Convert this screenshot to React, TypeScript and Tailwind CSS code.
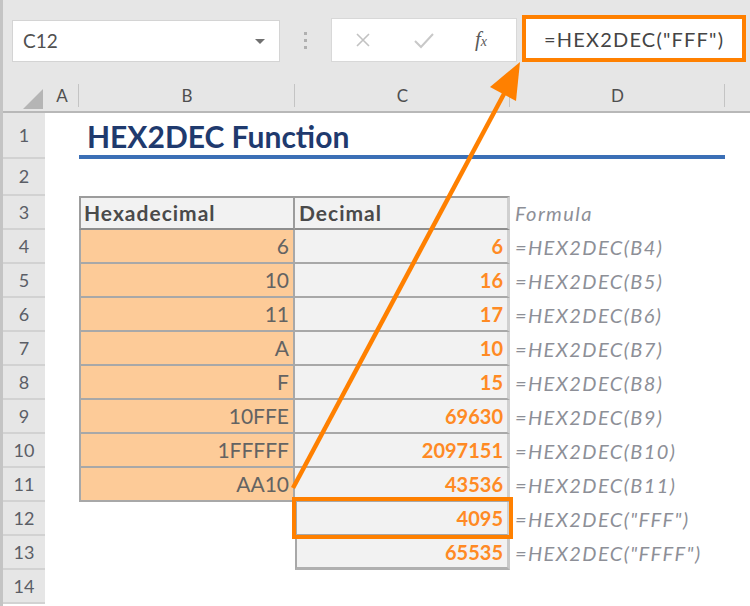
import React from 'react';

interface Row {
  n: number;
  hex?: string;
  dec?: string;
  formula?: string;
}

const rows: Row[] = [
  { n: 4, hex: '6', dec: '6', formula: '=HEX2DEC(B4)' },
  { n: 5, hex: '10', dec: '16', formula: '=HEX2DEC(B5)' },
  { n: 6, hex: '11', dec: '17', formula: '=HEX2DEC(B6)' },
  { n: 7, hex: 'A', dec: '10', formula: '=HEX2DEC(B7)' },
  { n: 8, hex: 'F', dec: '15', formula: '=HEX2DEC(B8)' },
  { n: 9, hex: '10FFE', dec: '69630', formula: '=HEX2DEC(B9)' },
  { n: 10, hex: '1FFFFF', dec: '2097151', formula: '=HEX2DEC(B10)' },
  { n: 11, hex: 'AA10', dec: '43536', formula: '=HEX2DEC(B11)' },
];

const font = { fontFamily: 'Lato, "Open Sans", sans-serif' };

// shared text styles for the sheet cells
const hexText = 'text-[21px] text-[#636363]';
const decText = 'text-[20px] font-bold text-[#ff8a24]';
const fText = 'text-[20px] italic tracking-[1.4px] text-[#8d8f97]';

function RowHead({ n, h }: { n: number; h: string }) {
  return (
    <div
      className={`w-[42px] ${h} shrink-0 bg-[#e6e6e6] border-b-2 border-[#d2d2d2] flex items-center justify-center text-[18px] text-[#5b5e66]`}
    >
      {n}
    </div>
  );
}

function Toolbar() {
  return (
    <div className="h-[80px] bg-[#e6e6e6] flex items-start">
      <div className="ml-[9px] mt-[20px] w-[268px] h-[42px] bg-white border border-[#d4d4d4] flex items-center justify-between pl-[10px] pr-[14px]">
        <span className="text-[19px] text-[#505050]">C12</span>
        <span className="w-0 h-0 border-l-[5px] border-r-[5px] border-t-[5px] border-l-transparent border-r-transparent border-t-[#707070]" />
      </div>
      <div className="ml-[24px] mt-[32px] flex flex-col gap-[4px]">
        <span className="w-[3px] h-[3px] bg-[#b0b0b0]" />
        <span className="w-[3px] h-[3px] bg-[#b0b0b0]" />
        <span className="w-[3px] h-[3px] bg-[#b0b0b0]" />
      </div>
      <div className="ml-[24px] mt-[18px] w-[186px] h-[44px] bg-white border border-[#d8d8d8] flex items-center">
        <svg className="ml-[23px]" width="16" height="16" viewBox="0 0 16 16">
          <path d="M2 2 L14 14 M14 2 L2 14" stroke="#c2c2c2" strokeWidth="1.6" />
        </svg>
        <svg className="ml-[42px]" width="22" height="18" viewBox="0 0 22 18">
          <path d="M2 10 L8 16 L20 3" stroke="#c8c8c8" strokeWidth="2" fill="none" />
        </svg>
        <span
          className="ml-[40px] text-[21px] italic text-[#5a5a5a]"
          style={{ fontFamily: '"Liberation Serif", serif' }}
        >
          f<span className="text-[14px]">x</span>
        </span>
      </div>
      <div className="ml-[5px] mt-[15px] w-[224px] h-[47px] bg-white border-4 border-[#ff8000] flex items-center pl-[18px]">
        <span className="text-[20px] tracking-[1.2px] text-[#444444]">=HEX2DEC("FFF")</span>
      </div>
    </div>
  );
}

function ColumnHeader() {
  const col = 'h-full flex items-center justify-center text-[17px] text-[#4f4f4f] relative';
  const sep = 'absolute right-0 top-[4px] bottom-[4px] w-px bg-[#c4c4c4]';
  return (
    <div className="h-[33px] bg-[#e6e6e6] border-b-2 border-[#b8b8b8] flex">
      <div className="w-[42px] h-full relative">
        <svg className="absolute right-[2px] bottom-[2px]" width="20" height="20" viewBox="0 0 20 20">
          <polygon points="20,0 20,20 0,20" fill="#b5b5b5" />
        </svg>
      </div>
      <div className={`${col} w-[34px]`}>
        A<span className={sep} />
      </div>
      <div className={`${col} w-[216px]`}>
        B<span className={sep} />
      </div>
      <div className={`${col} w-[215px]`}>
        C<span className={sep} />
      </div>
      <div className={`${col} w-[215px]`}>
        D<span className={sep} />
      </div>
    </div>
  );
}

export default function App() {
  return (
    <div className="w-[750px] h-[606px] overflow-hidden bg-white border-l-[3px] border-[#c4c4c4] relative" style={font}>
      <Toolbar />
      <ColumnHeader />

      {/* row 1: title */}
      <div className="flex h-[46px]">
        <RowHead n={1} h="h-[46px]" />
        <div className="w-[34px]" />
        <div className="w-[646px] border-b-[4px] border-[#3b6fb6] flex items-center pl-[8px] pt-[4px]">
          <span className="text-[30px] font-bold text-[#1f3a6e] leading-none">HEX2DEC Function</span>
        </div>
      </div>

      {/* row 2 */}
      <div className="flex h-[37px]">
        <RowHead n={2} h="h-[37px]" />
      </div>

      {/* row 3: headers */}
      <div className="flex h-[34px]">
        <RowHead n={3} h="h-[34px]" />
        <div className="w-[34px]" />
        <div className="w-[216px] bg-[#f2f2f2] border-2 border-t-[#9c9c9c] border-l-[#9c9c9c] border-r-[#9c9c9c] border-b-[#8e8e8e] flex items-center pl-[3px] text-[21px] tracking-[1px] font-bold text-[#4a4a4a]">
          Hexadecimal
        </div>
        <div className="w-[215px] bg-[#f2f2f2] border-t-2 border-r-[3px] border-b-2 border-t-[#9c9c9c] border-r-[#d0d0d0] border-b-[#8e8e8e] flex items-center pl-[4px] text-[21px] tracking-[1px] font-bold text-[#4a4a4a]">
          Decimal
        </div>
        <div className={`flex items-center pl-[5px] ${fText}`}>Formula</div>
      </div>

      {rows.map((r) => (
        <div key={r.n} className="flex h-[34px]">
          <RowHead n={r.n} h="h-[34px]" />
          <div className="w-[34px]" />
          <div className={`w-[216px] bg-[#fdcb98] border-l-2 border-r-2 border-b-2 border-[#a8a8a8] flex items-center justify-end pr-[4px] ${hexText}`}>
            {r.hex}
          </div>
          <div className={`w-[215px] bg-[#f2f2f2] border-r-[3px] border-b-2 border-r-[#d0d0d0] border-b-[#a8a8a8] flex items-center justify-end pr-[4px] ${decText}`}>
            {r.dec}
          </div>
          <div className={`flex items-center pl-[5px] ${fText}`}>{r.formula}</div>
        </div>
      ))}

      {/* row 12 */}
      <div className="flex h-[34px]">
        <RowHead n={12} h="h-[34px]" />
        <div className="w-[250px]" />
        <div className={`w-[215px] relative bg-[#f2f2f2] border-l-2 border-r-[3px] border-b-2 border-l-[#a8a8a8] border-r-[#d0d0d0] border-b-[#a8a8a8] flex items-center justify-end pr-[4px] ${decText}`}>
          4095
          <span className="absolute -left-[5px] -right-[6px] -top-[5px] -bottom-[5px] border-4 border-[#ff8000]" />
        </div>
        <div className={`flex items-center pl-[5px] ${fText}`}>=HEX2DEC("FFF")</div>
      </div>

      {/* row 13 */}
      <div className="flex h-[34px]">
        <RowHead n={13} h="h-[34px]" />
        <div className="w-[250px]" />
        <div className={`w-[215px] bg-[#f2f2f2] border-l-2 border-r-[3px] border-b-[3px] border-l-[#a8a8a8] border-r-[#c8c8c8] border-b-[#b0b0b0] flex items-center justify-end pr-[4px] ${decText}`}>
          65535
        </div>
        <div className={`flex items-center pl-[5px] ${fText}`}>=HEX2DEC("FFFF")</div>
      </div>

      {/* row 14 */}
      <div className="flex h-[34px]">
        <RowHead n={14} h="h-[34px]" />
      </div>

      {/* arrow from B11 to formula bar */}
      <svg className="absolute left-[-3px] top-0 pointer-events-none" width="750" height="606" viewBox="0 0 750 606">
        <line x1="293" y1="488" x2="505" y2="92" stroke="#ff8000" strokeWidth="4.5" />
        <polygon points="520,62 516,101 490,87" fill="#ff8000" />
      </svg>
    </div>
  );
}
